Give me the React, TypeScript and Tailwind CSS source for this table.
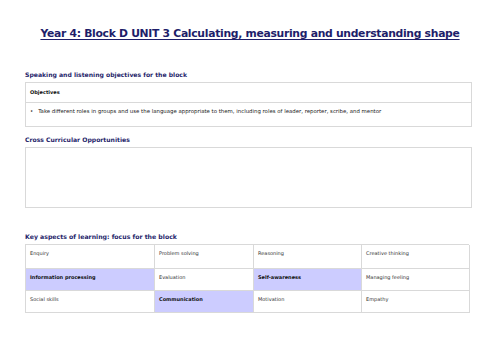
const cells = [
  { text: 'Enquiry' },
  { text: 'Problem solving' },
  { text: 'Reasoning' },
  { text: 'Creative thinking' },
  { text: 'Information processing', hl: true },
  { text: 'Evaluation' },
  { text: 'Self-awareness', hl: true },
  { text: 'Managing feeling' },
  { text: 'Social skills' },
  { text: 'Communication', hl: true },
  { text: 'Motivation' },
  { text: 'Empathy' },
]

const rowHeights = ['h-[24px]', 'h-[22px]', 'h-[22px]']

export default function App() {
  return (
    <div className="w-[500px] h-[354px] bg-white overflow-hidden font-['DejaVu_Sans',sans-serif]">
      <div className="pt-[28px] flex justify-center">
        <h1 className="text-[10.8px] leading-[12px] font-semibold text-[#1e1e6a] underline underline-offset-[2px] decoration-[1px] tracking-[-0.3px] whitespace-nowrap">
          Year 4: Block D UNIT 3 Calculating, measuring and understanding shape
        </h1>
      </div>

      <div className="px-[25px] w-[472px] box-content">
        <h2 className="mt-[31px] text-[6.1px] leading-[8px] font-bold text-[#1e1e6a] whitespace-nowrap">
          Speaking and listening objectives for the block
        </h2>
        <div className="mt-[3px] w-[447px] border border-[#d9d9d9]">
          <div className="h-[20px] flex items-center pl-[4px] text-[5px] font-bold text-[#111] border-b border-[#d9d9d9]">
            Objectives
          </div>
          <div className="h-[23px] pt-[5px] pl-[4px] text-[5.4px] leading-[6px] text-[#222] flex gap-[5px] whitespace-nowrap">
            <span>•</span>
            <span>
              Take different roles in groups and use the language appropriate to them, including roles of leader, reporter, scribe, and mentor
            </span>
          </div>
        </div>

        <h2 className="mt-[9px] text-[6.1px] leading-[8px] font-bold text-[#1e1e6a] whitespace-nowrap">
          Cross Curricular Opportunities
        </h2>
        <div className="mt-[3px] w-[447px] h-[61px] border border-[#d9d9d9]" />

        <h2 className="mt-[25px] text-[6.2px] leading-[8px] font-bold text-[#1e1e6a] whitespace-nowrap">
          Key aspects of learning: focus for the block
        </h2>
        <div className="mt-[3px] w-[444px] grid grid-cols-[129px_99px_108px_108px] border-l border-t border-[#d9d9d9]">
          {cells.map((c, i) => (
            <div
              key={i}
              className={`${rowHeights[Math.floor(i / 4)]} pl-[4px] pt-[5px] text-[5px] leading-[6px] whitespace-nowrap border-r border-b border-[#d9d9d9] ${
                c.hl ? 'bg-[#ccccff] font-bold text-[#111]' : 'text-[#333]'
              }`}
            >
              {c.text}
            </div>
          ))}
        </div>
      </div>
    </div>
  )
}
